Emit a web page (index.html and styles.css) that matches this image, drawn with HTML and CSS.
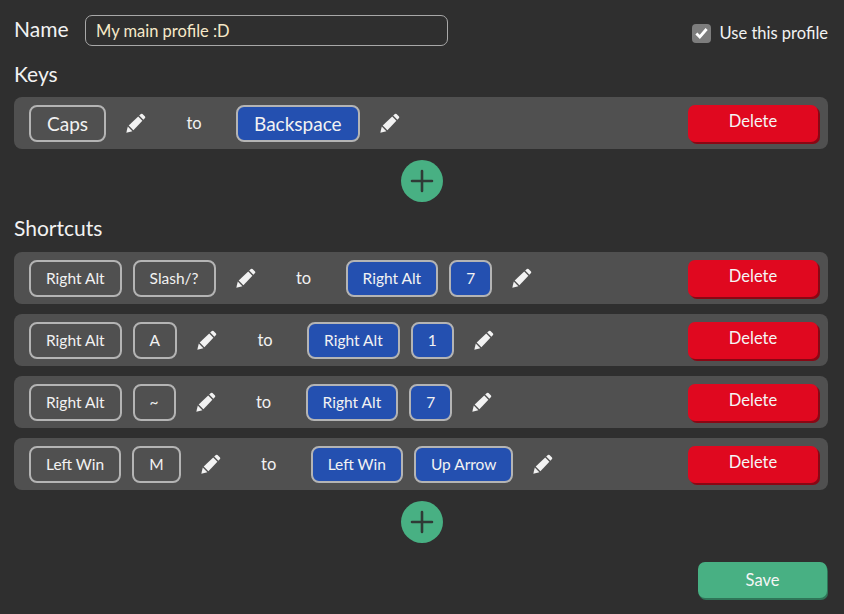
FILE: index.html
```html
<!DOCTYPE html>
<html lang="en">
<head>
<meta charset="utf-8">
<title>Profile</title>
<link rel="stylesheet" href="styles.css">
</head>
<body>
<svg class="defs" width="0" height="0" aria-hidden="true">
  <symbol id="pencil" viewBox="0 0 20 20">
    <path fill="currentColor" d="M0.3 19.7 L1.8 13.6 L6.4 18.2 Z"/>
    <path fill="currentColor" d="M2.7 12.6 L12.2 3.6 L16.4 7.8 L7.4 17.3 Z"/>
    <path fill="currentColor" d="M13.2 2.6 L14.9 1 Q15.7 .4 16.5 1 L19 3.5 Q19.6 4.3 19 5.1 L17.4 6.8 Z"/>
  </symbol>
  <symbol id="plus" viewBox="0 0 42 42">
    <path d="M11 21 H31 M21 11 V31" stroke="#2f3a36" stroke-width="2.6" stroke-linecap="round" fill="none"/>
  </symbol>
</svg>
<main class="page">
  <header class="top">
    <label class="name-label" for="name">Name</label>
    <input class="name-input" id="name" type="text" value="My main profile :D">
    <div class="use">
      <span class="check"><svg viewBox="0 0 20 20" width="20" height="20"><path d="M4.6 10.6 L8.2 14.2 L15.4 5.8" fill="none" stroke="#fff" stroke-width="3"/></svg></span>
      <span>Use this profile</span>
    </div>
  </header>

  <h2 class="title title-keys">Keys</h2>
  <section class="rows">
    <div class="row">
      <span class="chip big">Caps</span>
      <svg class="pen"><use href="#pencil"/></svg>
      <span class="to">to</span>
      <span class="chip big blue">Backspace</span>
      <svg class="pen"><use href="#pencil"/></svg>
      <button class="del">Delete</button>
    </div>
  </section>
  <div class="add-wrap"><button class="add" aria-label="Add"><svg width="42" height="42"><use href="#plus"/></svg></button></div>

  <h2 class="title title-short">Shortcuts</h2>
  <section class="rows">
    <div class="row">
      <span class="chip">Right Alt</span><span class="chip">Slash/?</span>
      <svg class="pen"><use href="#pencil"/></svg>
      <span class="to">to</span>
      <span class="chip blue">Right Alt</span><span class="chip blue">7</span>
      <svg class="pen"><use href="#pencil"/></svg>
      <button class="del">Delete</button>
    </div>
    <div class="row">
      <span class="chip">Right Alt</span><span class="chip">A</span>
      <svg class="pen"><use href="#pencil"/></svg>
      <span class="to">to</span>
      <span class="chip blue">Right Alt</span><span class="chip blue">1</span>
      <svg class="pen"><use href="#pencil"/></svg>
      <button class="del">Delete</button>
    </div>
    <div class="row">
      <span class="chip">Right Alt</span><span class="chip">~</span>
      <svg class="pen"><use href="#pencil"/></svg>
      <span class="to">to</span>
      <span class="chip blue">Right Alt</span><span class="chip blue">7</span>
      <svg class="pen"><use href="#pencil"/></svg>
      <button class="del">Delete</button>
    </div>
    <div class="row">
      <span class="chip">Left Win</span><span class="chip">M</span>
      <svg class="pen"><use href="#pencil"/></svg>
      <span class="to">to</span>
      <span class="chip blue">Left Win</span><span class="chip blue">Up Arrow</span>
      <svg class="pen"><use href="#pencil"/></svg>
      <button class="del">Delete</button>
    </div>
  </section>
  <div class="add-wrap add-last"><button class="add" aria-label="Add"><svg width="42" height="42"><use href="#plus"/></svg></button></div>

  <footer class="foot"><button class="save">Save</button></footer>
</main>
</body>
</html>
```
FILE: styles.css
```css
* { box-sizing: border-box; }
html, body { margin: 0; height: 100%; }
body {
  background: #2f2f2f;
  color: #f2f2f2;
  font-family: Lato, "Open Sans", sans-serif;
  overflow: hidden;
}
.defs { position: absolute; }
.page { padding: 15px 16px 0 14px; }
.top { display: flex; align-items: flex-start; height: 31px; }
.name-label { font-size: 21px; line-height: 28px; width: 71px; flex: none; }
.name-input {
  width: 363px; height: 31px; flex: none;
  background: transparent;
  border: 1px solid #a8a8a8;
  border-radius: 7px;
  padding: 0 10px;
  color: #f6e9c8;
  font: 16.5px Lato, sans-serif;
  outline: none;
}
.use { margin-left: auto; margin-top: 8px; display: flex; align-items: center; gap: 9px; font-size: 16.5px; line-height: 20px; margin-right: -16px; padding-right: 16px; }
.check { width: 19px; height: 19px; background: #7d7d7d; border-radius: 4px; display: flex; align-items: center; justify-content: center; }
.title { margin: 0; font-weight: 400; font-size: 21px; line-height: 28px; }
.title-keys { margin-top: 14px; }
.title-short { margin-top: 12px; }
.rows { display: flex; flex-direction: column; gap: 10px; }
.title-keys + .rows { margin-top: 9px; }
.title-short + .rows { margin-top: 10px; }
.row {
  height: 52px;
  background: #505050;
  border-radius: 8px;
  display: flex; align-items: center;
  padding: 0 10px 0 15px;
}
.chip {
  height: 37px;
  display: inline-flex; align-items: center; justify-content: center;
  padding: 0 15px;
  border: 2px solid #b4b4b4;
  border-radius: 8px;
  font-size: 15.5px;
  margin-right: 11px;
}
.chip.big { font-size: 19px; margin-right: 0; padding: 0 16px; }
.chip.blue { background: #2450b0; }
.chip + .pen { margin-left: 9px; }
.chip.big + .pen { margin-left: 20px; }
.pen { width: 20px; height: 20px; color: #f2f2f2; flex: none; margin-left: 20px; }
.to { width: 90px; flex: none; text-align: center; padding-left: 6px; font-size: 16.5px; }
.del {
  margin-left: auto;
  width: 130px; height: 37px;
  background: #e0081f;
  border: 0;
  border-radius: 7px;
  color: #f5f5f5;
  font: 16.5px Lato, sans-serif;
  box-shadow: 2px 2px 0 #8a0714;
  padding: 0 0 4px;
}
.add-wrap { display: flex; justify-content: center; margin-top: 11px; padding-left: 1px; }
.add { width: 42px; height: 42px; padding: 0; border: 0; border-radius: 50%; background: #48b083; }
.add svg { display: block; }
.foot { display: flex; justify-content: flex-end; margin-top: 19px; }
.save {
  width: 129px; height: 36px;
  margin-right: 1px;
  background: #48b083;
  border: 0;
  border-radius: 7px;
  color: #f5f5f5;
  font: 16.5px Lato, sans-serif;
  box-shadow: 1px 2px 0 #2f7558;
  padding: 0;
}
```
